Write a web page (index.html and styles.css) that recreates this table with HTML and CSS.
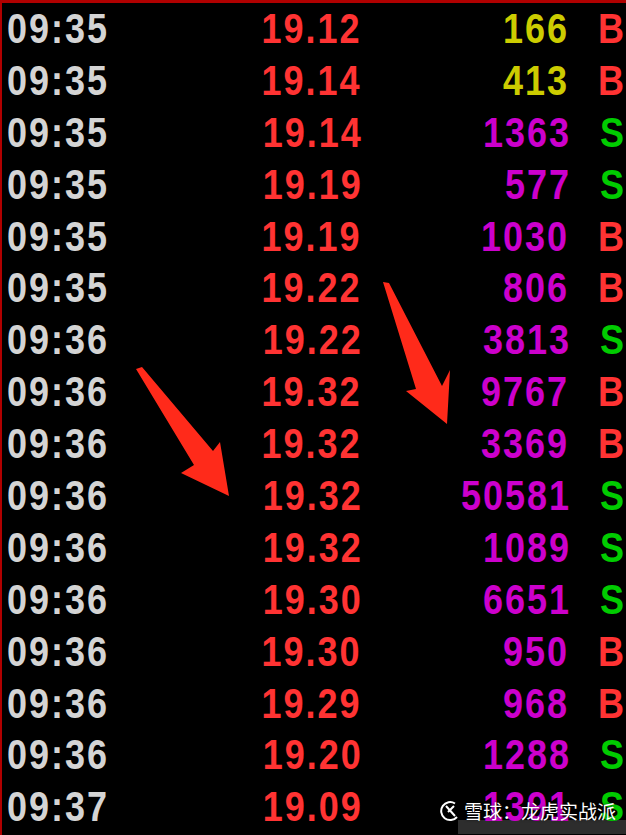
FILE: index.html
```html
<!DOCTYPE html>
<html lang="zh-CN">
<head>
  <meta charset="UTF-8">
  <title>分时成交</title>
  <link rel="stylesheet" href="styles.css">
</head>
<body>
  <section class="ticks">
    <div class="row"><span class="time">09:35</span><span class="price">19.12</span><span class="vol small">166</span><span class="side buy">B</span></div>
    <div class="row"><span class="time">09:35</span><span class="price">19.14</span><span class="vol small">413</span><span class="side buy">B</span></div>
    <div class="row"><span class="time">09:35</span><span class="price">19.14</span><span class="vol big">1363</span><span class="side sell">S</span></div>
    <div class="row"><span class="time">09:35</span><span class="price">19.19</span><span class="vol big">577</span><span class="side sell">S</span></div>
    <div class="row"><span class="time">09:35</span><span class="price">19.19</span><span class="vol big">1030</span><span class="side buy">B</span></div>
    <div class="row"><span class="time">09:35</span><span class="price">19.22</span><span class="vol big">806</span><span class="side buy">B</span></div>
    <div class="row"><span class="time">09:36</span><span class="price">19.22</span><span class="vol big">3813</span><span class="side sell">S</span></div>
    <div class="row"><span class="time">09:36</span><span class="price">19.32</span><span class="vol big">9767</span><span class="side buy">B</span></div>
    <div class="row"><span class="time">09:36</span><span class="price">19.32</span><span class="vol big">3369</span><span class="side buy">B</span></div>
    <div class="row"><span class="time">09:36</span><span class="price">19.32</span><span class="vol big">50581</span><span class="side sell">S</span></div>
    <div class="row"><span class="time">09:36</span><span class="price">19.32</span><span class="vol big">1089</span><span class="side sell">S</span></div>
    <div class="row"><span class="time">09:36</span><span class="price">19.30</span><span class="vol big">6651</span><span class="side sell">S</span></div>
    <div class="row"><span class="time">09:36</span><span class="price">19.30</span><span class="vol big">950</span><span class="side buy">B</span></div>
    <div class="row"><span class="time">09:36</span><span class="price">19.29</span><span class="vol big">968</span><span class="side buy">B</span></div>
    <div class="row"><span class="time">09:36</span><span class="price">19.20</span><span class="vol big">1288</span><span class="side sell">S</span></div>
    <div class="row"><span class="time">09:37</span><span class="price">19.09</span><span class="vol big">1391</span><span class="side sell">S</span></div>
  </section>

  <!-- arrows drawn over the list -->
  <svg class="arrows" width="626" height="835" viewBox="0 0 626 835">
    <polygon points="136,369 142,367 213,451 220,442 229,496 181,473 194,465" fill="#ff2a1a"/>
    <polygon points="383,282 389,283 442,386 450,370 447,424 406,391 416,389" fill="#ff2a1a"/>
  </svg>

  <div class="watermark">
    <svg class="logo" width="20" height="22" viewBox="0 0 20 22">
      <path d="M15 3.5A9 9 0 1 0 17 17" fill="none" stroke="#fff" stroke-width="2"/>
      <path d="M6 6l9 10M14 6 8 12" fill="none" stroke="#fff" stroke-width="2"/>
    </svg>
    <span>雪球：龙虎实战派</span>
  </div>
</body>
</html>
```

FILE: styles.css
```css
* {
  padding: 0;
  margin: 0;
  box-sizing: border-box;
}

body {
  width: 626px;
  height: 835px;
  overflow: hidden;
  position: relative;
  background: #000;
  font-family: 'Liberation Sans', Arial, sans-serif;
}

.ticks {
  height: 835px;
  border-top: 3px solid #b00000;
  border-left: 2px solid #b00000;
}

.row {
  display: flex;
  align-items: center;
  height: 51.9px;
  font-size: 36px;
  font-weight: bold;
  letter-spacing: 2px;
  line-height: 1;
}

.row span {
  display: inline-block;
  transform: scaleY(1.16);
}

.time {
  width: 110px;
  padding-left: 5px;
  color: #d4d4d4;
}

.price {
  width: 254px;
  text-align: right;
  color: #ff3333;
}

.vol {
  width: 210px;
  text-align: right;
}

.vol.small {
  color: #cccc00;
}

.vol.big {
  color: #cc00cc;
}

.side {
  padding-left: 29px;
}

.buy {
  color: #ff3333;
}

.sell {
  color: #00cc00;
}

.arrows {
  position: absolute;
  left: 0;
  top: 0;
}

.watermark {
  position: absolute;
  left: 440px;
  top: 800px;
  display: flex;
  align-items: center;
  gap: 4px;
  color: #fff;
  font-family: 'Noto Sans CJK SC', sans-serif;
  font-size: 19px;
  line-height: 22px;
  text-shadow: 0 0 3px rgba(0,0,0,.6);
}

.watermark::after {
  content: '';
  position: absolute;
  left: 18px;
  right: -18px;
  top: 20px;
  height: 14px;
  background: rgba(90,90,90,.5);
  z-index: -1;
}
```
